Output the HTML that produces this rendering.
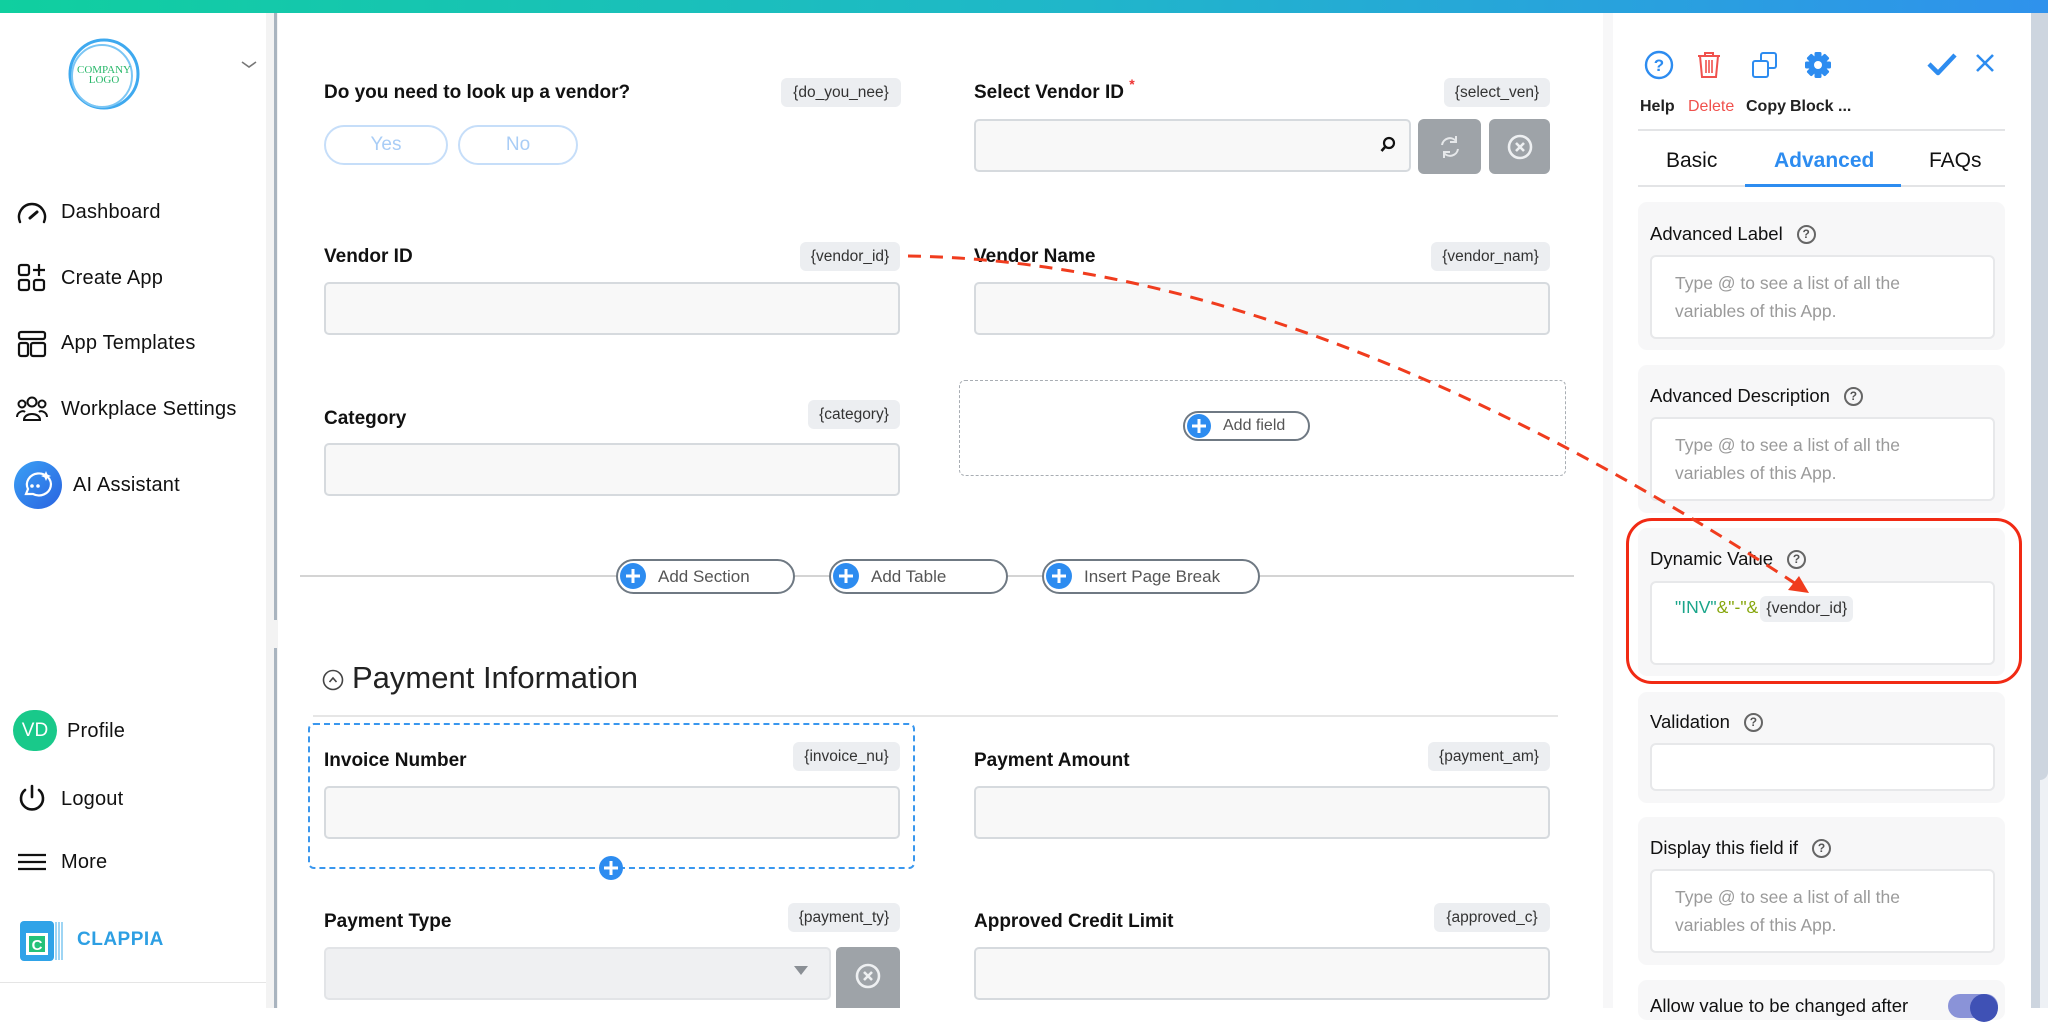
<!DOCTYPE html>
<html><head><meta charset="utf-8"><style>
*{box-sizing:border-box;margin:0;padding:0}
body{width:2048px;height:1008px;overflow:hidden;background:#fff;font-family:"Liberation Sans",Arial,sans-serif;color:#111;position:relative}
.a{position:absolute}
.top{left:0;top:0;width:2048px;height:13px;background:linear-gradient(90deg,#10cf9f,#1fb8c8 50%,#2f92ec)}
.nav{position:absolute;left:61px;font-size:20px;color:#111;letter-spacing:.2px}
.lbl{position:absolute;font-size:19px;font-weight:bold;color:#111}
.tag{position:absolute;height:29px;line-height:29px;background:#eceef1;border-radius:6px;font-size:15.5px;color:#333;text-align:center}
.inp{position:absolute;height:53px;background:#f8f8f8;border:2px solid #d6dade;border-radius:5px}
.pbtn{position:absolute;top:559px;height:35px;border:2px solid #6f7983;border-radius:18px;font-size:17px;color:#555;line-height:31px;padding-left:40px;background:#fff}
.plus{position:absolute;width:26px;height:26px;border-radius:50%;background:#2d8cf0}
.plus:before,.plus:after{content:"";position:absolute;background:#fff;left:50%;top:50%;transform:translate(-50%,-50%)}
.plus:before{width:14px;height:3px}.plus:after{width:3px;height:14px}
.card{position:absolute;left:1638px;width:367px;background:#f7f7f8;border-radius:9px}
.cl{position:absolute;left:12px;font-size:18.5px;color:#111}
.q{display:inline-block;width:19px;height:19px;border:2px solid #666;border-radius:50%;font-size:12px;line-height:15px;text-align:center;color:#555;font-weight:bold;vertical-align:middle;margin-left:14px;position:relative;top:-1px}
.ci{position:absolute;left:12px;width:345px;background:#fff;border:2px solid #e7e8ea;border-radius:6px;font-size:17.5px;color:#9a9a9a;line-height:28px;padding:12px 0 0 23px}
.tl{position:absolute;top:98px;font-size:16px;font-weight:bold;color:#222}
</style></head><body>
<div class="a top"></div>
<!-- sidebar -->
<div class="a" style="left:266px;top:13px;width:12px;height:995px;background:#f3f3f3"></div>
<div class="a" style="left:274px;top:13px;width:3px;height:607px;background:#a9b4bf"></div>
<div class="a" style="left:274px;top:648px;width:3px;height:360px;background:#a9b4bf"></div>
<div class="a" style="left:0;top:982px;width:266px;height:1px;background:#e5e5e5"></div>
<svg class="a" style="left:64px;top:36px" width="80" height="76"><ellipse cx="40" cy="38" rx="34" ry="34" fill="none" stroke="#3ea9ef" stroke-width="3"/><ellipse cx="38" cy="40" rx="30" ry="31" fill="none" stroke="#7cc6f4" stroke-width="2"/><text x="40" y="37" text-anchor="middle" font-family="Liberation Serif" font-size="11" fill="#2ab86b">COMPANY</text><text x="40" y="47" text-anchor="middle" font-family="Liberation Serif" font-size="11" fill="#2ab86b">LOGO</text></svg>
<svg class="a" style="left:241px;top:60px" width="16" height="10"><path d="M1 2 L8 7 L15 2" fill="none" stroke="#777" stroke-width="1.6"/></svg>
<svg class="a" style="left:16px;top:200px" width="32" height="28"><path d="M4 22 A13 13 0 1 1 28 22" fill="none" stroke="#111" stroke-width="2.4" stroke-linecap="round"/><path d="M14 18 L21 12" stroke="#111" stroke-width="3" stroke-linecap="round"/></svg>
<div class="nav" style="top:201px">Dashboard</div>
<svg class="a" style="left:17px;top:263px" width="30" height="30"><rect x="2" y="2" width="10" height="10" rx="2" fill="none" stroke="#111" stroke-width="2.2"/><rect x="2" y="17" width="10" height="10" rx="2" fill="none" stroke="#111" stroke-width="2.2"/><rect x="17" y="17" width="10" height="10" rx="2" fill="none" stroke="#111" stroke-width="2.2"/><path d="M22 1v12M16 7h12" stroke="#111" stroke-width="2.2"/></svg>
<div class="nav" style="top:267px">Create App</div>
<svg class="a" style="left:17px;top:330px" width="30" height="28"><rect x="2" y="2" width="26" height="7" rx="2" fill="none" stroke="#111" stroke-width="2.2"/><rect x="2" y="13" width="9" height="13" rx="2" fill="none" stroke="#111" stroke-width="2.2"/><rect x="14" y="13" width="14" height="13" rx="2" fill="none" stroke="#111" stroke-width="2.2"/></svg>
<div class="nav" style="top:332px">App Templates</div>
<svg class="a" style="left:15px;top:395px" width="34" height="28"><circle cx="17" cy="7" r="4.5" fill="none" stroke="#111" stroke-width="2"/><circle cx="7" cy="9" r="3.5" fill="none" stroke="#111" stroke-width="2"/><circle cx="27" cy="9" r="3.5" fill="none" stroke="#111" stroke-width="2"/><path d="M9 25c0-8 16-8 16 0zM2 22c0-5 6-7 8-5M32 22c0-5-6-7-8-5" fill="none" stroke="#111" stroke-width="2"/></svg>
<div class="nav" style="top:398px">Workplace Settings</div>
<svg class="a" style="left:14px;top:461px" width="48" height="48"><defs><linearGradient id="g" x1="0" y1="0" x2="1" y2="1"><stop offset="0" stop-color="#3aa0f5"/><stop offset="1" stop-color="#2a63e0"/></linearGradient></defs><circle cx="24" cy="24" r="24" fill="url(#g)"/><path d="M12 33 L14 28 A12 11 0 1 1 19 33 Z" fill="none" stroke="#fff" stroke-width="2.2"/><circle cx="18" cy="25" r="1.8" fill="#fff"/><circle cx="24" cy="25" r="1.8" fill="#fff"/><path d="M32 10l1.5 3.5 3.5 1.5-3.5 1.5-1.5 3.5-1.5-3.5-3.5-1.5 3.5-1.5z" fill="#fff"/></svg>
<div class="nav" style="top:474px;left:73px">AI Assistant</div>
<div class="a" style="left:13px;top:710px;width:44px;height:41px;border-radius:21px;background:#19c98a;color:#fff;font-size:19px;line-height:41px;text-align:center">VD</div>
<div class="nav" style="top:720px;left:67px">Profile</div>
<svg class="a" style="left:17px;top:783px" width="30" height="30"><path d="M8 7 A11 11 0 1 0 22 7" fill="none" stroke="#111" stroke-width="2.6" stroke-linecap="round"/><path d="M15 3v11" stroke="#111" stroke-width="2.6" stroke-linecap="round"/></svg>
<div class="nav" style="top:788px">Logout</div>
<svg class="a" style="left:17px;top:852px" width="30" height="20"><path d="M1 3h28M1 10h28M1 17h28" stroke="#111" stroke-width="2.2"/></svg>
<div class="nav" style="top:851px">More</div>
<svg class="a" style="left:20px;top:919px" width="46" height="44"><rect x="0" y="2" width="34" height="40" rx="4" fill="#2fa3e8"/><path d="M36 3v38M39 3v38M42 3v38" stroke="#7fc7f1" stroke-width="1.5"/><rect x="6" y="14" width="22" height="22" fill="#fff"/><rect x="9" y="17" width="16" height="16" fill="#25c27a"/><text x="17" y="31" text-anchor="middle" font-family="Liberation Sans" font-weight="bold" font-size="15" fill="#fff">C</text></svg>
<div class="a" style="left:77px;top:929px;font-size:19px;font-weight:bold;color:#2d9fe3;letter-spacing:.5px">CLAPPIA</div>

<!-- main right gray -->
<div class="a" style="left:1603px;top:13px;width:10px;height:995px;background:#f7f7f8"></div>

<!-- fields -->
<div class="lbl" style="left:324px;top:82px">Do you need to look up a vendor?</div>
<div class="tag" style="left:781px;top:78px;width:120px">{do_you_nee}</div>
<div class="a" style="left:324px;top:125px;width:124px;height:40px;border:2px solid #c6def9;border-radius:20px;color:#a9cdf6;font-size:19px;line-height:36px;text-align:center">Yes</div>
<div class="a" style="left:458px;top:125px;width:120px;height:40px;border:2px solid #c6def9;border-radius:20px;color:#a9cdf6;font-size:19px;line-height:36px;text-align:center">No</div>

<div class="lbl" style="left:974px;top:82px">Select Vendor ID <span style="color:#e33;font-size:14px;position:relative;top:-9px">*</span></div>
<div class="tag" style="left:1444px;top:78px;width:106px">{select_ven}</div>
<div class="inp" style="left:974px;top:119px;width:437px;height:53px"></div>
<svg class="a" style="left:1380px;top:136px" width="16" height="18"><circle cx="9" cy="7" r="5" fill="none" stroke="#111" stroke-width="2.2"/><path d="M5.5 10.5 L1.5 15" stroke="#111" stroke-width="2.6"/></svg>
<div class="a" style="left:1418px;top:119px;width:63px;height:55px;background:#9ea3a8;border-radius:6px"></div>
<svg class="a" style="left:1438px;top:134px" width="24" height="26"><path d="M4 11 A8 8 0 0 1 18 7 M20 15 A8 8 0 0 1 6 19" fill="none" stroke="#e6e8ea" stroke-width="2"/><path d="M18 2v6h-6M6 24v-6h6" fill="none" stroke="#e6e8ea" stroke-width="2"/></svg>
<div class="a" style="left:1489px;top:119px;width:61px;height:55px;background:#9ea3a8;border-radius:6px"></div>
<svg class="a" style="left:1506px;top:133px" width="28" height="28"><circle cx="14" cy="14" r="11" fill="none" stroke="#eef0f2" stroke-width="2.6"/><path d="M10 10l8 8M18 10l-8 8" stroke="#eef0f2" stroke-width="2.6"/></svg>

<div class="lbl" style="left:324px;top:246px">Vendor ID</div>
<div class="tag" style="left:800px;top:242px;width:100px">{vendor_id}</div>
<div class="inp" style="left:324px;top:282px;width:576px"></div>
<div class="lbl" style="left:974px;top:246px">Vendor Name</div>
<div class="tag" style="left:1431px;top:242px;width:119px">{vendor_nam}</div>
<div class="inp" style="left:974px;top:282px;width:576px"></div>

<div class="lbl" style="left:324px;top:408px">Category</div>
<div class="tag" style="left:808px;top:400px;width:92px">{category}</div>
<div class="inp" style="left:324px;top:443px;width:576px"></div>
<div class="a" style="left:959px;top:380px;width:607px;height:96px;border:1.5px dashed #a8adb3;border-radius:6px"></div>
<div class="a" style="left:1183px;top:411px;width:127px;height:30px;border:2px solid #6f7983;border-radius:15px;font-size:16px;color:#555;line-height:26px;padding-left:38px">Add field</div>
<div class="plus" style="left:1187px;top:414px;width:24px;height:24px"></div>

<div class="a" style="left:300px;top:575px;width:1274px;height:2px;background:#d4d4d4"></div>
<div class="pbtn" style="left:616px;width:179px">Add Section</div>
<div class="plus" style="left:620px;top:563px"></div>
<div class="pbtn" style="left:829px;width:179px">Add Table</div>
<div class="plus" style="left:833px;top:563px"></div>
<div class="pbtn" style="left:1042px;width:218px">Insert Page Break</div>
<div class="plus" style="left:1046px;top:563px"></div>

<svg class="a" style="left:322px;top:668px" width="22" height="24"><circle cx="11" cy="12" r="9.5" fill="none" stroke="#444" stroke-width="1.6"/><path d="M7.5 14 L11 10 L14.5 14" fill="none" stroke="#444" stroke-width="1.6"/></svg>
<div class="a" style="left:352px;top:660px;font-size:31px;color:#222">Payment Information</div>
<div class="a" style="left:313px;top:715px;width:1245px;height:2px;background:#e6e6e6"></div>

<div class="a" style="left:308px;top:723px;width:607px;height:146px;border:2px dashed #3a97ee;border-radius:6px"></div>
<div class="plus" style="left:599px;top:856px;width:24px;height:24px"></div>
<div class="lbl" style="left:324px;top:750px">Invoice Number</div>
<div class="tag" style="left:793px;top:742px;width:107px">{invoice_nu}</div>
<div class="inp" style="left:324px;top:786px;width:576px"></div>
<div class="lbl" style="left:974px;top:750px">Payment Amount</div>
<div class="tag" style="left:1428px;top:742px;width:122px">{payment_am}</div>
<div class="inp" style="left:974px;top:786px;width:576px"></div>

<div class="lbl" style="left:324px;top:911px">Payment Type</div>
<div class="tag" style="left:788px;top:903px;width:112px">{payment_ty}</div>
<div class="inp" style="left:324px;top:947px;width:507px;background:#eff0f2;border-color:#e2e4e7"></div>
<div class="a" style="left:794px;top:966px;width:0;height:0;border-left:7px solid transparent;border-right:7px solid transparent;border-top:9px solid #8a8f95"></div>
<div class="a" style="left:836px;top:947px;width:64px;height:61px;background:#9ea3a8;border-radius:5px 5px 0 0"></div>
<svg class="a" style="left:854px;top:962px" width="28" height="28"><circle cx="14" cy="14" r="11" fill="none" stroke="#eef0f2" stroke-width="2.6"/><path d="M10 10l8 8M18 10l-8 8" stroke="#eef0f2" stroke-width="2.6"/></svg>
<div class="lbl" style="left:974px;top:911px">Approved Credit Limit</div>
<div class="tag" style="left:1434px;top:903px;width:116px">{approved_c}</div>
<div class="inp" style="left:974px;top:947px;width:576px"></div>

<!-- right panel -->
<div class="a" style="left:2031px;top:13px;width:17px;height:995px;background:#eef1f5"></div>
<div class="a" style="left:2031px;top:13px;width:17px;height:767px;background:#cdd5df;border-radius:0 0 8px 8px"></div>
<div class="a" style="left:2031px;top:13px;width:9px;height:995px;background:#cdd5df"></div>

<svg class="a" style="left:1644px;top:50px" width="30" height="30"><circle cx="15" cy="15" r="13" fill="none" stroke="#2d8cf0" stroke-width="2.4"/><text x="15" y="21" text-anchor="middle" font-family="Liberation Sans" font-weight="bold" font-size="17" fill="#2d8cf0">?</text></svg>
<svg class="a" style="left:1696px;top:51px" width="26" height="28"><path d="M2 5h22M9 5V2h8v3M4 5l2 21h14l2-21" fill="none" stroke="#f0514d" stroke-width="2"/><path d="M10 9v13M13 9v13M16 9v13" stroke="#f0514d" stroke-width="1.6"/></svg>
<svg class="a" style="left:1751px;top:51px" width="28" height="28"><rect x="10" y="2" width="15" height="15" rx="2" fill="none" stroke="#2d8cf0" stroke-width="2"/><rect x="2" y="10" width="15" height="16" rx="2" fill="#fff" stroke="#2d8cf0" stroke-width="2"/></svg>
<svg class="a" style="left:1804px;top:51px" width="28" height="28"><g transform="translate(14,14)" fill="#2d8cf0"><rect x="-3.5" y="-13" width="7" height="26" rx="1.5"/><rect x="-3.5" y="-13" width="7" height="26" rx="1.5" transform="rotate(45)"/><rect x="-3.5" y="-13" width="7" height="26" rx="1.5" transform="rotate(90)"/><rect x="-3.5" y="-13" width="7" height="26" rx="1.5" transform="rotate(135)"/><circle r="9.5"/></g><circle cx="14" cy="14" r="4" fill="#fff"/></svg>
<svg class="a" style="left:1926px;top:52px" width="32" height="24"><path d="M3 12 L12 21 L29 3" fill="none" stroke="#2d8cf0" stroke-width="4.5" stroke-linejoin="round"/></svg>
<svg class="a" style="left:1975px;top:53px" width="20" height="20"><path d="M2 2L18 18M18 2L2 18" stroke="#2d8cf0" stroke-width="2.6"/></svg>
<div class="tl" style="left:1640px">Help</div>
<div class="tl" style="left:1688px;color:#f0514d;font-weight:normal">Delete</div>
<div class="tl" style="left:1746px">Copy</div>
<div class="tl" style="left:1790px">Block ...</div>
<div class="a" style="left:1638px;top:129px;width:367px;height:2px;background:#e3e4e6"></div>
<div class="a" style="left:1666px;top:149px;font-size:21px;color:#111">Basic</div>
<div class="a" style="left:1774px;top:149px;font-size:21px;color:#2d8cf0;font-weight:bold">Advanced</div>
<div class="a" style="left:1929px;top:149px;font-size:21px;color:#111">FAQs</div>
<div class="a" style="left:1638px;top:185px;width:367px;height:2px;background:#e3e4e6"></div>
<div class="a" style="left:1745px;top:184px;width:156px;height:3px;background:#2d8cf0"></div>

<div class="card" style="top:202px;height:148px">
 <div class="cl" style="top:21px">Advanced Label<span class="q">?</span></div>
 <div class="ci" style="top:53px;height:84px">Type @ to see a list of all the<br>variables of this App.</div>
</div>
<div class="card" style="top:365px;height:148px">
 <div class="cl" style="top:20px">Advanced Description<span class="q">?</span></div>
 <div class="ci" style="top:52px;height:84px">Type @ to see a list of all the<br>variables of this App.</div>
</div>
<div class="card" style="top:528px;height:148px">
 <div class="cl" style="top:20px">Dynamic Value<span class="q">?</span></div>
 <div class="ci" style="top:53px;height:84px;padding-top:10px;color:#1aa58a">"INV"<span style="color:#86a60c">&amp;"-"&amp;</span><span style="display:inline-block;background:#edeff2;border-radius:6px;color:#333;font-size:16px;padding:0 6px;margin-left:2px;line-height:26px">{vendor_id}</span></div>
</div>
<div class="a" style="left:1626px;top:518px;width:396px;height:166px;border:3px solid #f12a14;border-radius:26px"></div>
<div class="card" style="top:692px;height:111px">
 <div class="cl" style="top:19px">Validation<span class="q">?</span></div>
 <div class="ci" style="top:51px;height:48px"></div>
</div>
<div class="card" style="top:817px;height:148px">
 <div class="cl" style="top:20px">Display this field if<span class="q">?</span></div>
 <div class="ci" style="top:52px;height:84px">Type @ to see a list of all the<br>variables of this App.</div>
</div>
<div class="card" style="top:980px;height:40px">
 <div class="cl" style="top:15px">Allow value to be changed after</div>
</div>
<div class="a" style="left:1948px;top:994px;width:50px;height:24px;border-radius:12px;background:#8a93d8"></div>
<div class="a" style="left:1970px;top:994px;width:28px;height:28px;border-radius:50%;background:#3f51b5"></div>

<!-- red arrow -->
<svg class="a" style="left:0;top:0" width="2048" height="1008"><path d="M908 256 Q1306 262 1796 584" fill="none" stroke="#f03c1e" stroke-width="3" stroke-dasharray="13 9"/><path d="M1809 593 L1788 590 L1799 576 Z" fill="#f03c1e"/></svg>
</body></html>
